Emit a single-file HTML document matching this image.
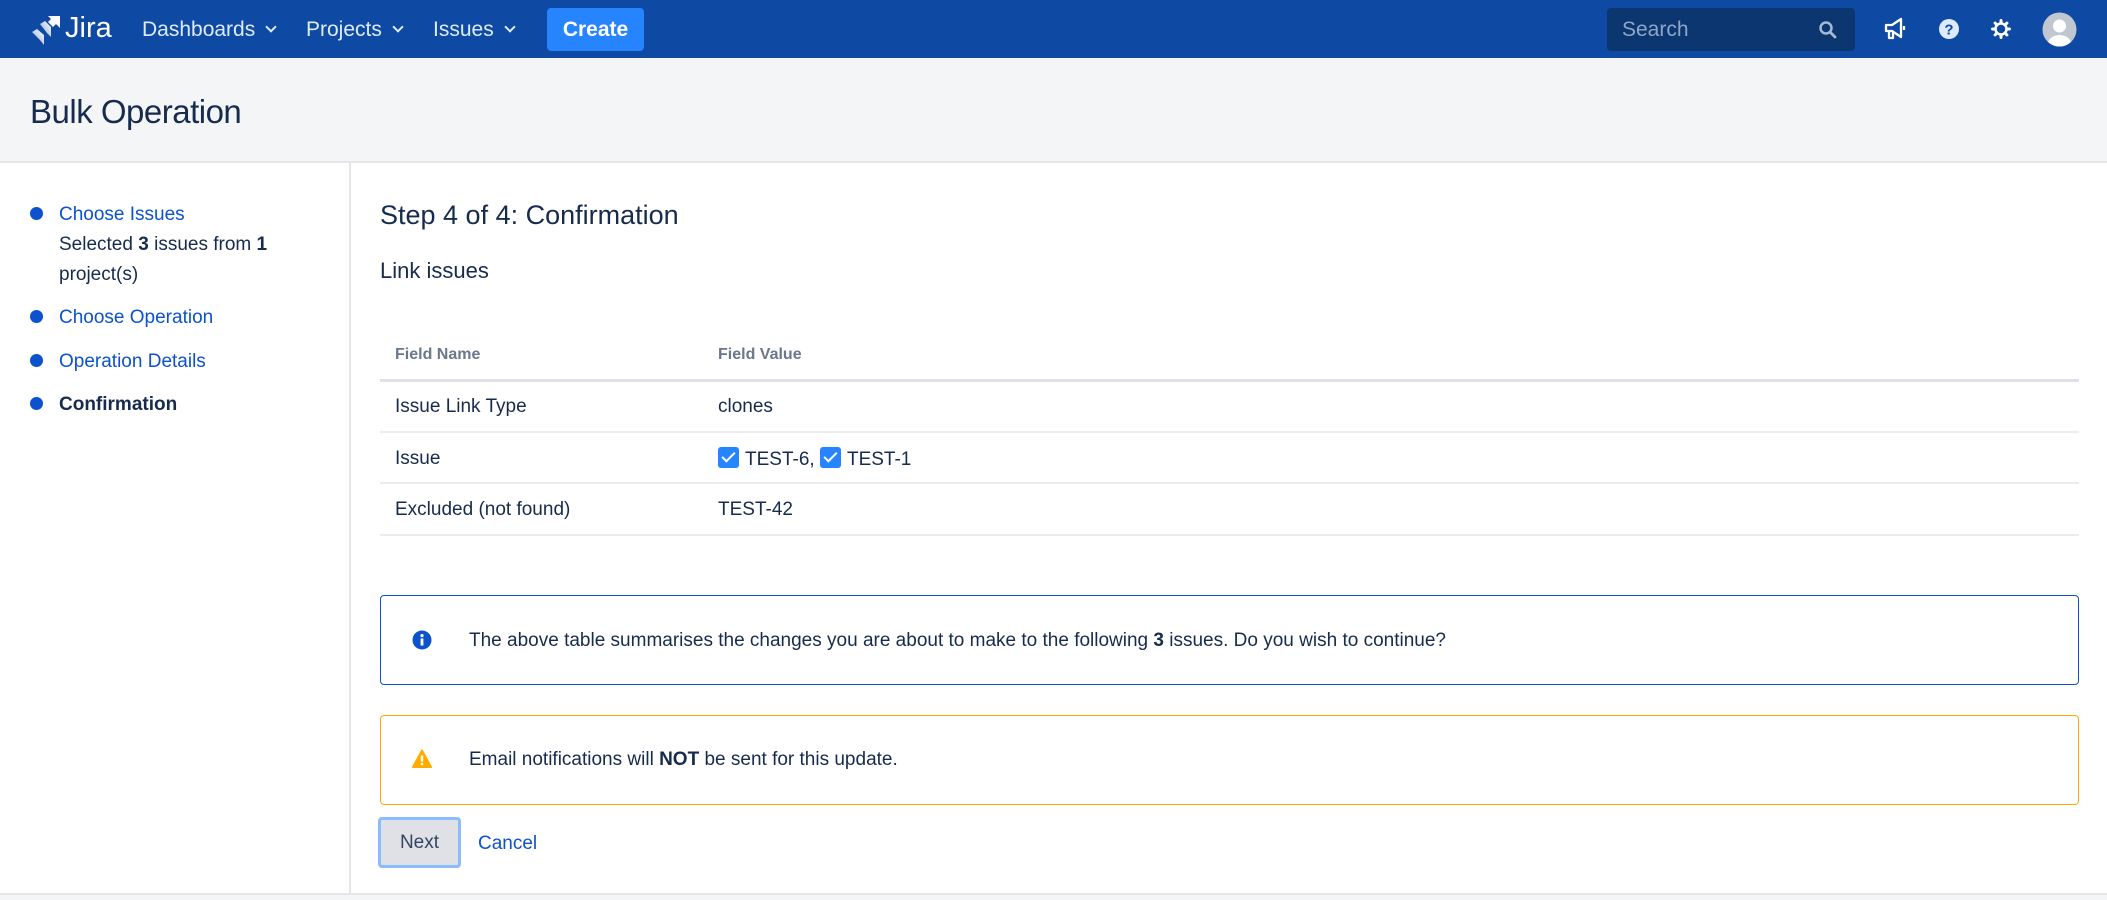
<!DOCTYPE html>
<html><head><meta charset="utf-8"><style>
*{margin:0;padding:0;box-sizing:border-box}
body{width:2107px;height:900px;overflow:hidden;background:#fff;font-family:"Liberation Sans",sans-serif;color:#172b4d;position:relative}
.abs{position:absolute}
.nav{left:0;top:0;width:2107px;height:58px;background:#0e4aa3}
.navt{color:#deebff;font-size:21px;top:18px;white-space:nowrap}
.chev{display:inline-block;width:8px;height:8px;border-right:2.5px solid #deebff;border-bottom:2.5px solid #deebff;transform:rotate(45deg);margin-left:12px;position:relative;top:-5px}
.create{left:547px;top:8px;width:97px;height:43px;background:#2684ff;border-radius:4px;color:#fff;font-size:21px;font-weight:bold;text-align:center;line-height:44px}
.search{left:1607px;top:8px;width:248px;height:43px;background:#0b3670;border-radius:4px;color:#8ea6c9;font-size:21px;line-height:44px;padding-left:15px}
.ph{left:0;top:58px;width:2107px;height:105px;background:#f4f5f7;border-bottom:2px solid #e4e6ea}
.ph h1{position:absolute;left:30px;top:35px;font-size:33px;font-weight:normal;letter-spacing:-0.5px}
.side{left:0;top:163px;width:351px;height:731px;border-right:2px solid #e4e6ea}
.bottom{left:0;top:893px;width:2107px;height:7px;background:#f4f5f7;border-top:2px solid #e4e6ea}
.st{font-size:19px;left:59px;white-space:nowrap}
.dot{width:13px;height:13px;border-radius:50%;background:#0b52cc;left:30px}
a{color:#0b52cc;text-decoration:none}
.row{left:380px;width:1699px;height:2px;background:#ebecf0}
.td{font-size:19px;white-space:nowrap}
.box{left:380px;width:1699px;border-radius:4px}
.cb{display:inline-block;width:21px;height:21px;background:#2684ff;border-radius:3px;vertical-align:-3px;margin-right:6px;position:relative}
.cb:after{content:"";position:absolute;left:7px;top:2px;width:5px;height:11px;border-right:2.5px solid #fff;border-bottom:2.5px solid #fff;transform:rotate(45deg)}
</style></head><body>
<div class="abs nav"></div>
<svg class="abs" style="left:30px;top:15px" width="32" height="30" viewBox="0 0 32 30">
<defs><linearGradient id="g" x1="1" y1="0" x2="0" y2="1"><stop offset="0" stop-color="#fff"/><stop offset="1" stop-color="#fff" stop-opacity=".5"/></linearGradient></defs>
<path d="M18 1h12v12l-4-4-3 3-5-5 3-3z" fill="#fff"/><path d="M10 9l5-3 6 6v10l-4-4z" fill="url(#g)"/><path d="M2 17l5-3 7 6v10l-4-5z" fill="url(#g)"/></svg>
<div class="abs" style="left:65px;top:12px;color:#fff;font-size:29px">Jira</div>
<div class="abs navt" style="left:142px">Dashboards<span class="chev"></span></div>
<div class="abs navt" style="left:306px">Projects<span class="chev"></span></div>
<div class="abs navt" style="left:433px">Issues<span class="chev"></span></div>
<div class="abs create">Create</div>
<div class="abs search">Search</div>
<svg class="abs" style="left:1818px;top:20px" width="20" height="20" viewBox="0 0 20 20"><circle cx="8" cy="8" r="5.5" fill="none" stroke="#a5b8d4" stroke-width="2.5"/><path d="M12 12l5 5" stroke="#a5b8d4" stroke-width="2.8" stroke-linecap="round"/></svg>
<svg class="abs" style="left:1883px;top:17px" width="26" height="24" viewBox="0 0 26 24"><path d="M3 8h6l9-6v18l-9-6H3z M6 14v7h4v-7" fill="none" stroke="#fff" stroke-width="2.3" stroke-linejoin="round"/><path d="M21 9v4" stroke="#fff" stroke-width="2.3"/></svg>
<svg class="abs" style="left:1937px;top:17px" width="24" height="24" viewBox="0 0 24 24"><circle cx="12" cy="12" r="10" fill="#deebff"/><text x="12" y="17.5" font-family="Liberation Sans" font-weight="bold" font-size="15" fill="#0e4aa3" text-anchor="middle">?</text></svg>
<svg class="abs" style="left:1990px;top:18px" width="22" height="22" viewBox="0 0 26 26"><g stroke="#fff" stroke-width="3.5" stroke-linecap="round"><path d="M13 3v3M13 20v3M3 13h3M20 13h3M6 6l2 2M18 18l2 2M6 20l2-2M18 8l2-2"/></g><circle cx="13" cy="13" r="6.5" fill="none" stroke="#fff" stroke-width="3"/></svg>
<svg class="abs" style="left:2042px;top:12px" width="35" height="35" viewBox="0 0 35 35"><defs><clipPath id="c"><circle cx="17.5" cy="17.5" r="17"/></clipPath></defs><circle cx="17.5" cy="17.5" r="17" fill="#c1c7d0"/><g clip-path="url(#c)" fill="#fff"><circle cx="17.5" cy="14" r="6.5"/><ellipse cx="17.5" cy="33" rx="12" ry="10"/></g></svg>

<div class="abs ph"><h1>Bulk Operation</h1></div>
<div class="abs side"></div>
<div class="abs bottom"></div>

<div class="abs dot" style="top:207px"></div>
<div class="abs st" style="top:204px"><a>Choose Issues</a></div>
<div class="abs st" style="top:234px">Selected <b>3</b> issues from <b>1</b></div>
<div class="abs st" style="top:264px">project(s)</div>
<div class="abs dot" style="top:310px"></div>
<div class="abs st" style="top:307px"><a>Choose Operation</a></div>
<div class="abs dot" style="top:354px"></div>
<div class="abs st" style="top:351px"><a>Operation Details</a></div>
<div class="abs dot" style="top:397px"></div>
<div class="abs st" style="top:394px;font-weight:bold">Confirmation</div>

<div class="abs" style="left:380px;top:200px;font-size:27px">Step 4 of 4: Confirmation</div>
<div class="abs" style="left:380px;top:258px;font-size:22px">Link issues</div>

<div class="abs td" style="left:395px;top:346px;font-size:16px;font-weight:bold;color:#6b778c">Field Name</div>
<div class="abs td" style="left:718px;top:346px;font-size:16px;font-weight:bold;color:#6b778c">Field Value</div>
<div class="abs row" style="top:379px;height:3px;background:#dfe1e6"></div>
<div class="abs td" style="left:395px;top:396px">Issue Link Type</div>
<div class="abs td" style="left:718px;top:396px">clones</div>
<div class="abs row" style="top:431px"></div>
<div class="abs td" style="left:395px;top:448px">Issue</div>
<div class="abs td" style="left:718px;top:447px"><span class="cb"></span>TEST-6, <span class="cb"></span>TEST-1</div>
<div class="abs row" style="top:482px"></div>
<div class="abs td" style="left:395px;top:499px">Excluded (not found)</div>
<div class="abs td" style="left:718px;top:499px">TEST-42</div>
<div class="abs row" style="top:534px"></div>

<div class="abs box" style="top:595px;height:90px;border:1.5px solid #0b52cc"></div>
<svg class="abs" style="left:412px;top:630px" width="20" height="20" viewBox="0 0 20 20"><circle cx="10" cy="10" r="9.5" fill="#0b52cc"/><rect x="8.6" y="8.5" width="2.8" height="7" fill="#fff"/><circle cx="10" cy="5.6" r="1.6" fill="#fff"/></svg>
<div class="abs td" style="left:469px;top:630px">The above table summarises the changes you are about to make to the following <b>3</b> issues. Do you wish to continue?</div>

<div class="abs box" style="top:715px;height:90px;border:1.5px solid #ffab00"></div>
<svg class="abs" style="left:412px;top:749px" width="20" height="19" viewBox="0 0 20 19"><path d="M10 1.5L19 18H1z" fill="#ffab00" stroke="#ffab00" stroke-width="2" stroke-linejoin="round"/><rect x="8.8" y="6.5" width="2.4" height="6" fill="#fff"/><circle cx="10" cy="15" r="1.3" fill="#fff"/></svg>
<div class="abs td" style="left:469px;top:749px">Email notifications will <b>NOT</b> be sent for this update.</div>

<div class="abs" style="left:378px;top:817px;width:83px;height:51px;background:#dfe1e6;border:3px solid #8bbcff;border-radius:4px;font-size:19px;text-align:center;line-height:46px;color:#344563">Next</div>
<div class="abs td" style="left:478px;top:833px"><a>Cancel</a></div>
</body></html>
